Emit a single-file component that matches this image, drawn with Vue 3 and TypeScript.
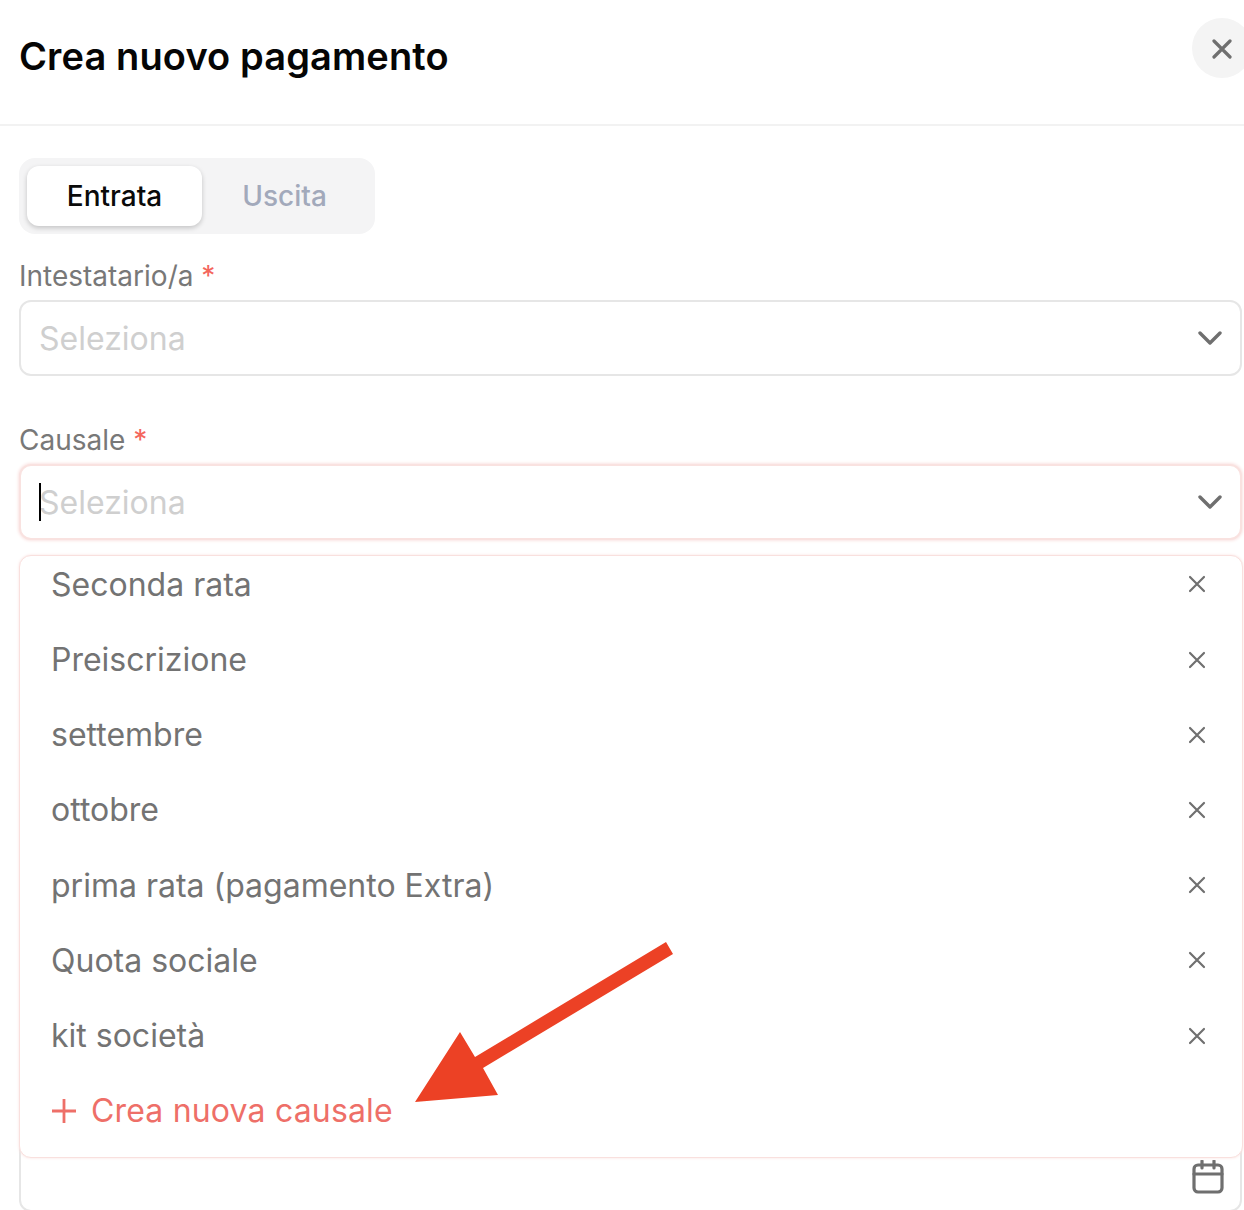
<script setup lang="ts">
const items: string[] = [
  'Seconda rata',
  'Preiscrizione',
  'settembre',
  'ottobre',
  'prima rata (pagamento Extra)',
  'Quota sociale',
  'kit società',
]
</script>

<template>
  <div class="page">
    <header class="head">
      <h1 class="title">Crea nuovo pagamento</h1>
      <button class="close" aria-label="Chiudi">
        <svg width="20" height="20" viewBox="0 0 20 20" fill="none" stroke="#6f6f6f" stroke-width="3.2" stroke-linecap="round">
          <path d="M2 2 18 18M18 2 2 18" />
        </svg>
      </button>
    </header>
    <main class="body">
      <div class="tabs">
        <div class="tab active">Entrata</div>
        <div class="tab">Uscita</div>
      </div>
      <label class="label first">Intestatario/a <span class="req">*</span></label>
      <div class="select">
        <span class="placeholder">Seleziona</span>
        <svg class="chev" width="24" height="14" viewBox="0 0 24 14" fill="none" stroke="#6f6f6f" stroke-width="3.4" stroke-linecap="round" stroke-linejoin="round">
          <path d="M2 2 12 12 22 2" />
        </svg>
      </div>
      <label class="label second">Causale <span class="req">*</span></label>
      <div class="anchor">
        <div class="select focused">
          <span class="caret"></span>
          <span class="placeholder">Seleziona</span>
          <svg class="chev" width="24" height="14" viewBox="0 0 24 14" fill="none" stroke="#6f6f6f" stroke-width="3.4" stroke-linecap="round" stroke-linejoin="round">
            <path d="M2 2 12 12 22 2" />
          </svg>
        </div>
        <div class="menu">
          <div class="list">
            <div v-for="item in items" :key="item" class="row">
              <span>{{ item }}</span>
              <svg width="18" height="18" viewBox="0 0 18 18" fill="none" stroke="#707070" stroke-width="2.2" stroke-linecap="round">
                <path d="M2 2 16 16M16 2 2 16" />
              </svg>
            </div>
            <div class="row create">
              <svg width="26" height="26" viewBox="0 0 26 26" fill="none" stroke="#ee6f68" stroke-width="2.8">
                <path d="M13 1V25M1 13H25" />
              </svg>
              <span>Crea nuova causale</span>
            </div>
          </div>
        </div>
      </div>
      <div class="date">
        <svg width="32" height="34" viewBox="0 0 32 34" fill="none" stroke="#6f6f6f" stroke-width="3.2" stroke-linecap="round" stroke-linejoin="round">
          <rect x="2" y="5" width="28" height="27" rx="4" />
          <path d="M2 14H30M10 1V8M22 1V8" />
        </svg>
      </div>
    </main>
    <svg class="arrow" width="270" height="170" viewBox="0 0 270 170">
      <path fill="#ec4125" d="M252 1 259 13 69 127 84 154 1 161 46 91 61 116Z" />
    </svg>
  </div>
</template>

<style>
html, body { margin: 0; background: #fff; }
</style>

<style scoped>
.page {
  position: relative;
  width: 1244px;
  height: 1210px;
  overflow: hidden;
  background: #fff;
  font-family: Inter, "Liberation Sans", sans-serif;
}
.head {
  height: 124px;
  border-bottom: 2px solid #f2f2f2;
  display: flex;
  padding-left: 19px;
}
.title {
  margin: 0;
  padding-top: 31px;
  font-size: 38px;
  line-height: 50px;
  font-weight: 600;
  letter-spacing: 0.12px;
  color: #050505;
}
.close {
  position: absolute;
  left: 1192px;
  top: 18px;
  width: 60px;
  height: 60px;
  padding: 1px 0 0 0;
  border: 0;
  border-radius: 50%;
  background: #f4f4f4;
  display: flex;
  align-items: center;
  justify-content: center;
}
.body {
  padding: 32px 2px 0 19px;
}
.tabs {
  display: flex;
  width: 356px;
  height: 76px;
  box-sizing: border-box;
  padding: 8px;
  border-radius: 16px;
  background: #f4f4f5;
}
.tab {
  width: 165px;
  display: flex;
  align-items: center;
  justify-content: center;
  font-size: 28px;
  font-weight: 500;
  color: #a2a9bb;
}
.tab.active {
  width: 175px;
  border-radius: 12px;
  background: #fff;
  color: #0a0a0a;
  box-shadow: 0 2px 5px rgba(0, 0, 0, 0.2);
}
.label {
  display: block;
  font-size: 28px;
  line-height: 34px;
  color: #787878;
}
.label.first { margin-top: 25px; margin-bottom: 7px; }
.label.second { margin-top: 47px; margin-bottom: 7px; }
.req { color: #f4665c; }
.anchor { position: relative; }
.select {
  height: 76px;
  box-sizing: border-box;
  border: 2px solid #e6e6e6;
  border-radius: 12px;
  display: flex;
  align-items: center;
  padding: 0 18px;
  background: #fff;
  position: relative;
}
.select.focused {
  border-color: #f9e2e0;
  box-shadow: 0 0 3px 1px #fae4e3;
}
.placeholder {
  font-size: 32px;
  color: #cfcfcf;
}
.chev { margin-left: auto; }
.caret {
  position: absolute;
  left: 18px;
  top: 17px;
  width: 2px;
  height: 38px;
  background: #000;
}
.menu {
  position: absolute;
  left: 0;
  right: -1px;
  top: 91px;
  height: 603px;
  box-sizing: border-box;
  padding: 0 31px;
  overflow: hidden;
  background: #fff;
  border: 1px solid #f9e0de;
  border-radius: 12px;
  box-shadow: 0 0 3px #fae2e0;
  z-index: 2;
}
.list { margin-top: -9.2px; }
.row {
  height: 75.2px;
  display: flex;
  align-items: center;
  justify-content: space-between;
  padding-right: 5px;
  font-size: 32px;
  color: #737373;
}
.create {
  justify-content: flex-start;
  gap: 14px;
  letter-spacing: 0.17px;
  color: #ee6f68;
}
.date {
  margin-top: 596px;
  height: 76px;
  box-sizing: border-box;
  border: 2px solid #e6e6e6;
  border-radius: 12px;
  display: flex;
  justify-content: flex-end;
  padding: 22px 16px 0 0;
}
.arrow {
  position: absolute;
  left: 414px;
  top: 941px;
  z-index: 3;
}
</style>
